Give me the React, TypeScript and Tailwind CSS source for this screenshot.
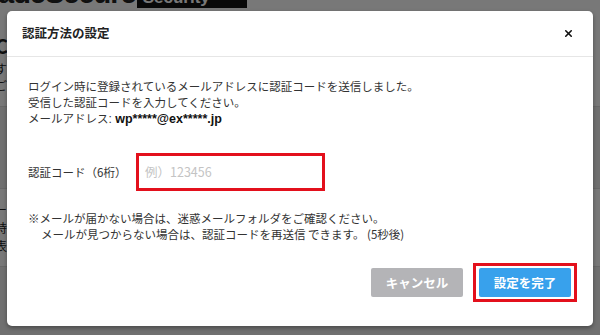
import { X } from 'lucide-react';

const jp = "font-['Noto_Sans_CJK_JP',sans-serif]";

function BackgroundPage() {
  return (
    <div className={`w-[600px] h-[335px] overflow-hidden bg-white text-[#222] ${jp}`}>
      {/* page header peeking out above the modal */}
      <div className="flex items-end gap-[1px] -mt-[24px] -ml-[2px] h-[32px]">
        <span className="font-['Liberation_Sans',sans-serif] text-[29px] font-bold leading-none tracking-[-1px]">adeSecure</span>
        <span className="bg-[#111] text-white font-['Liberation_Sans',sans-serif] font-bold text-[17px] leading-none px-[6px] pt-[4px] pb-[2px] w-[110px]">
          WP Security
        </span>
      </div>

      <div className="-ml-[5px]">
        <p className="mt-[26px] text-[20px] font-bold leading-[24px]">Co</p>
        <div className="text-[12px] leading-[17px] pt-[2px] pb-[12px]">
          <p>す</p>
          <p>ご</p>
        </div>
        <div className="border-t border-[#ddd] bg-[#eeeeee] h-[82px]" />
        <div className="border-t border-[#ddd] text-[12px] leading-[18px] pt-[12px] h-[78px]">
          <p>ー</p>
          <p>時</p>
          <p>表</p>
        </div>
        <div className="border-t border-[#ddd] bg-[#eeeeee] h-[80px]" />
      </div>
    </div>
  );
}

function AuthModal() {
  return (
    <div className={`absolute left-[7px] top-[11px] w-[586px] h-[315px] bg-white rounded-[5px] shadow-[0_2px_4px_rgba(0,0,0,0.35)] flex flex-col ${jp}`}>
      {/* Header */}
      <div className="h-[46px] flex items-center justify-between pl-[15px] pr-[19px] border-b border-[#e6e6e6]">
        <h2 className="text-[12.5px] font-bold text-[#222] leading-none">認証方法の設定</h2>
        <X className="w-[11px] h-[11px] text-[#111]" strokeWidth={3.5} />
      </div>

      {/* Body */}
      <div className="flex-1 flex flex-col pl-[21px] pr-[16px] pt-[21px] text-[11.5px] leading-[16px] text-[#333]">
        <p>ログイン時に登録されているメールアドレスに認証コードを送信しました。</p>
        <p>受信した認証コードを入力してください。</p>
        <p>
          メールアドレス<span className="font-['Liberation_Sans',sans-serif] text-[12px]">: </span>
          <span className="font-['Liberation_Sans',sans-serif] font-bold text-[12.5px] text-[#111]">wp*****@ex*****.jp</span>
        </p>

        <div className="flex items-center mt-[26px] h-[38px]">
          <label className="w-[108px] text-[#333]">認証コード（6桁）</label>
          <div className="w-[189px] h-[38px] border-[3px] border-[#e3101c] flex items-center px-[6px]">
            <span className="text-[12.5px] text-[#c4c4c4]">例）123456</span>
          </div>
        </div>

        <div className="mt-[19px]">
          <p>※メールが届かない場合は、迷惑メールフォルダをご確認ください。</p>
          <p className="pl-[13px]">メールが見つからない場合は、認証コードを再送信 できます。 (5秒後)</p>
        </div>

        <div className="flex items-center justify-end gap-[10px] mt-[21px]">
          <button className="w-[92px] h-[29px] rounded-[2px] bg-[#b4b4b7] text-white font-bold text-[12.5px]">
            キャンセル
          </button>
          <div className="border-[3px] border-[#e3101c] px-[3px] py-[2px]">
            <button className="w-[92px] h-[29px] rounded-[2px] bg-[#38a1ec] text-white font-bold text-[12.5px]">
              設定を完了
            </button>
          </div>
        </div>
      </div>
    </div>
  );
}

export default function App() {
  return (
    <div className="relative w-[600px] h-[335px] overflow-hidden">
      <BackgroundPage />
      <div className="absolute inset-0 bg-black/[0.53]" />
      <AuthModal />
    </div>
  );
}
